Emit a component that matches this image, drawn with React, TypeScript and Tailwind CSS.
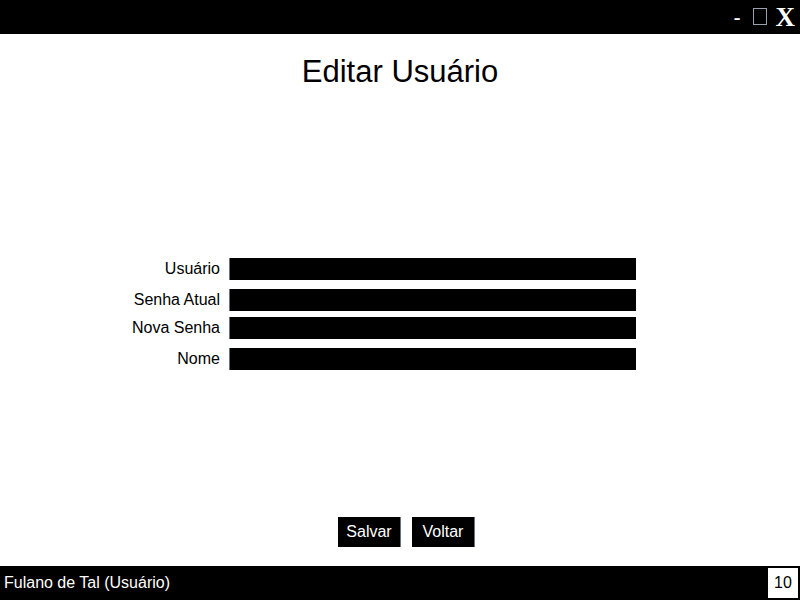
const font = { fontFamily: '"Liberation Sans", Arial, sans-serif' };

type FieldProps = {
  label: string;
  className?: string;
};

function Field({ label, className }: FieldProps) {
  return (
    <div className={"flex h-[22px] items-center " + (className ?? "")}>
      <label className="w-[220px] text-right text-[16px] leading-none text-black">{label}</label>
      <div className="ml-[9px] h-[22px] w-[407px] border-l border-l-gray-500 bg-black" />
    </div>
  );
}

export default function App() {
  return (
    <div className="flex h-[600px] w-[800px] flex-col bg-white" style={font}>
      <div className="flex h-[34px] items-center justify-end bg-black pr-[5px]">
        <span
          className="mr-[12px] text-[20px] font-bold leading-none text-white"
          style={{ fontFamily: '"Liberation Serif", serif' }}
        >
          -
        </span>
        <span className="mb-[2px] mr-[9px] h-[17px] w-[14px] border border-gray-400" />
        <span
          className="text-[27px] font-bold leading-none text-white"
          style={{ fontFamily: '"Liberation Serif", serif' }}
        >
          X
        </span>
      </div>

      <h1 className="mt-[20px] text-center text-[31px] leading-[36px] text-black">Editar Usuário</h1>

      <div className="mt-[168px] flex flex-col">
        <Field label="Usuário" />
        <Field label="Senha Atual" className="mt-[9px]" />
        <Field label="Nova Senha" className="mt-[6px]" />
        <Field label="Nome" className="mt-[9px]" />
      </div>

      <div className="mt-[147px] flex gap-[11px] pl-[338px]">
        <button className="h-[30px] w-[63px] border-r border-r-gray-500 bg-black text-[16px] text-white">
          Salvar
        </button>
        <button className="h-[30px] w-[63px] border-r border-r-gray-500 bg-black text-[16px] text-white">
          Voltar
        </button>
      </div>

      <div className="mt-auto flex h-[34px] items-center justify-between bg-black pl-[4px] pr-[2px]">
        <span className="text-[16px] text-white">Fulano de Tal (Usuário)</span>
        <span className="flex h-[30px] w-[30px] items-center justify-center bg-white text-[16px] text-black">
          10
        </span>
      </div>
    </div>
  );
}
